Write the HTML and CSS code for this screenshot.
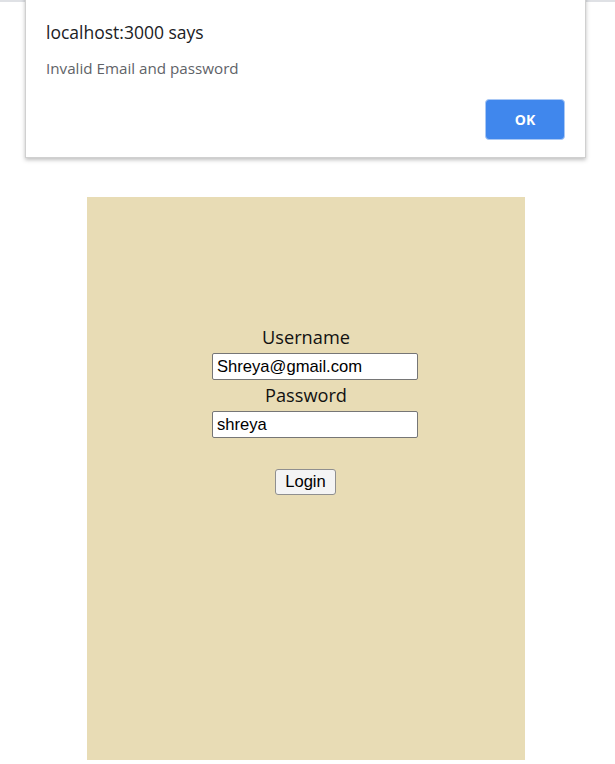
FILE: index.html
```html
<!DOCTYPE html>
<html>
<head>
<meta charset="utf-8">
<link rel="stylesheet" href="styles.css">
</head>
<body>
<div class="topbar"></div>
<main class="page">
  <form class="card">
    <label class="label" for="user">Username</label>
    <input class="field" id="user" type="text" value="Shreya@gmail.com">
    <label class="label" for="pass">Password</label>
    <input class="field" id="pass" type="text" value="shreya">
    <button class="login" type="button">Login</button>
  </form>
</main>
<div class="dialog">
  <div class="dialog-title">localhost:3000 says</div>
  <div class="dialog-msg">Invalid Email and password</div>
  <div class="dialog-actions">
    <button class="ok" type="button">OK</button>
  </div>
</div>
</body>
</html>
```
FILE: styles.css
```css
html, body {
  margin: 0;
  padding: 0;
  background: #ffffff;
}
body {
  width: 615px;
  height: 764px;
  overflow: hidden;
  position: relative;
  font-family: "Open Sans", "Noto Sans", sans-serif;
}
.topbar {
  height: 2px;
  background: #dfe1e5;
}
.page {
  padding-top: 195px;
  padding-left: 87px;
}
.card {
  width: 438px;
  height: 563px;
  background: #e8dcb5;
  display: flex;
  flex-direction: column;
  align-items: center;
  padding-top: 125px;
  box-sizing: border-box;
  margin: 0;
}
.label {
  display: block;
  height: 31px;
  line-height: 31px;
  font-family: "Open Sans", "Noto Sans", sans-serif;
  font-size: 18.2px;
  color: #111;
}
.field {
  width: 206px;
  height: 27px;
  box-sizing: border-box;
  margin: 0 0 0 18px;
  border: 1px solid #767676;
  border-radius: 2px;
  padding: 0 4px;
  font-family: "Liberation Sans", Arial, sans-serif;
  font-size: 16.6px;
  color: #000;
  background: #fff;
}
.login {
  margin-top: 31px;
  margin-left: -1px;
  width: 61px;
  height: 26px;
  box-sizing: border-box;
  border: 1px solid #8f8f8f;
  border-radius: 3px;
  background: #f4f4f4;
  font-family: "Liberation Sans", Arial, sans-serif;
  font-size: 16.6px;
  color: #000;
  padding: 0;
}
.dialog {
  position: absolute;
  left: 25px;
  top: -10px;
  width: 561px;
  height: 168px;
  box-sizing: border-box;
  background: #fff;
  border: 1px solid #d0d0d0;
  box-shadow: 0 2px 4px rgba(0,0,0,0.25);
  padding: 29px 20px 0 20px;
}
.dialog-title {
  font-size: 17.5px;
  color: #202124;
  line-height: 24px;
}
.dialog-msg {
  margin-top: 14px;
  font-size: 15.2px;
  color: #5f6368;
  line-height: 20px;
}
.dialog-actions {
  display: flex;
  justify-content: flex-end;
  margin-top: 21px;
}
.ok {
  width: 80px;
  height: 41px;
  box-sizing: border-box;
  background: #4087ed;
  border: 1px solid #a9c8f5;
  border-radius: 4px;
  color: #fff;
  font-family: "Open Sans", "Noto Sans", sans-serif;
  font-weight: 700;
  font-size: 14px;
  padding: 0;
}
```
